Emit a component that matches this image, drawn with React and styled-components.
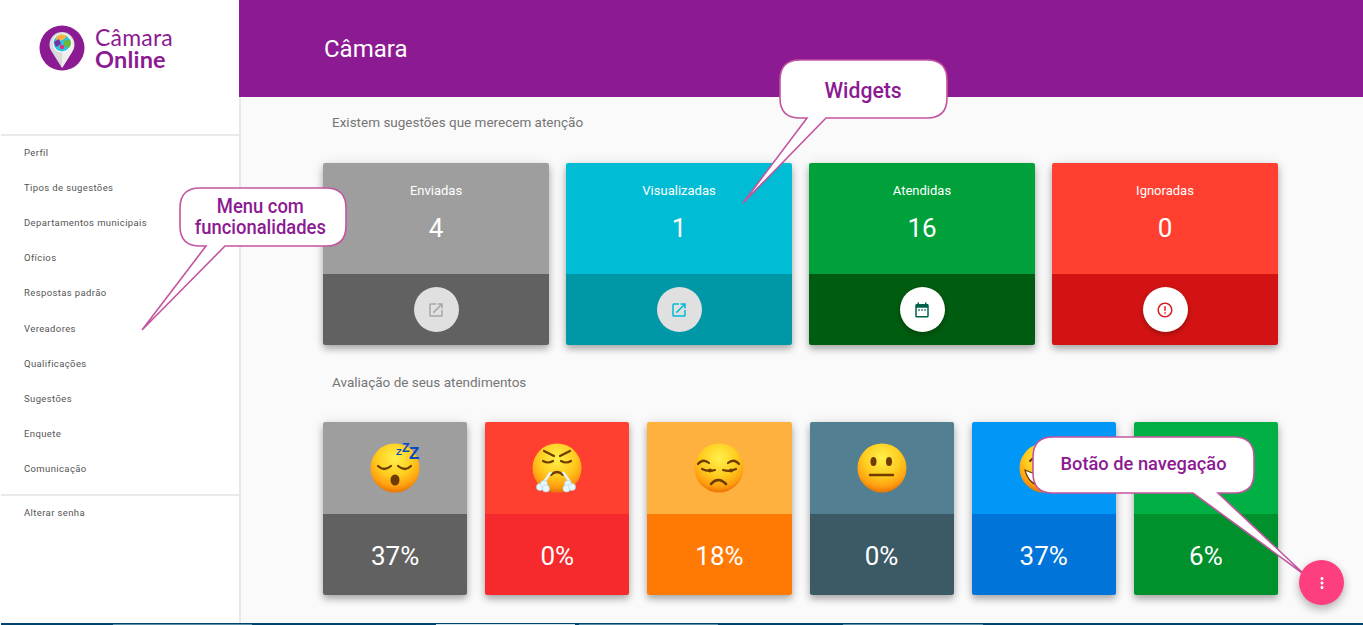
import React from "react";
import styled, { createGlobalStyle } from "styled-components";
import { MdOpenInNew, MdDateRange, MdErrorOutline, MdMoreVert } from "react-icons/md";

const GlobalStyle = createGlobalStyle`
  html, body {
    margin: 0;
    padding: 0;
    background: #fff;
    font-family: Roboto, "Liberation Sans", sans-serif;
    overflow: hidden;
  }
`;

const Page = styled.div`
  position: relative;
  width: 1363px;
  height: 625px;
  overflow: hidden;
  display: flex;
  flex-direction: column;
`;

const Main = styled.div`
  display: flex;
  height: 623px;
`;

/* sidebar */
const Sidebar = styled.aside`
  width: 239px;
  flex: none;
  background: #fff;
`;

const Brand = styled.div`
  height: 136px;
  display: flex;
  align-items: flex-start;
  gap: 10px;
  padding: 25px 0 0 38px;
  box-sizing: border-box;
  border-bottom: 2px solid #eaeaea;
  margin-left: 1px;
`;

const BrandText = styled.div`
  display: flex;
  flex-direction: column;
  color: #8c1a92;
  font-family: Lato, sans-serif;
  font-size: 23px;
  line-height: 22px;
  margin-top: 1px;
  letter-spacing: 0.2px;
`;

const BrandStrong = styled.span`
  font-weight: 700;
  font-size: 23.5px;
`;

const Menu = styled.ul`
  list-style: none;
  margin: ${({ $top }) => $top}px 0 0;
  padding: 0;
`;

const MenuItem = styled.li`
  height: 35.1px;
  padding-left: 24px;
  display: flex;
  align-items: center;
  font-size: 9.5px;
  letter-spacing: 0.38px;
  color: #555;
`;

const MenuRule = styled.hr`
  margin: 8px 0 0 1px;
  border: 0;
  border-top: 2px solid #eaeaea;
`;

/* content */
const Content = styled.main`
  flex: 1;
  display: flex;
  flex-direction: column;
  min-width: 0;
`;

const Header = styled.header`
  height: 97px;
  flex: none;
  background: #8c1a92;
  display: flex;
  align-items: center;
  padding-left: 85px;
  color: #fff;
  font-size: 24px;
  font-weight: 400;
`;

const Body = styled.div`
  flex: 1;
  background: #fafafa;
  border-left: 2px solid #e8e8e8;
  padding: 16px 85px 0 82px;
`;

const SectionTitle = styled.h2`
  margin: ${({ $first }) => ($first ? "0 0 32px" : "28px 0 31px")};
  padding-left: 9px;
  height: 18px;
  line-height: 18px;
  font-size: 13.5px;
  font-weight: 400;
  color: #757575;
`;

const CardGrid = styled.div`
  display: grid;
  grid-template-columns: repeat(${({ $cols }) => $cols}, 1fr);
  column-gap: ${({ $gap }) => $gap}px;
`;

const Card = styled.section`
  display: flex;
  flex-direction: column;
  border-radius: 2px;
  overflow: hidden;
  color: #fff;
  box-shadow: 0 4px 7px rgba(0, 0, 0, 0.3), 0 0 14px rgba(0, 0, 0, 0.08);
`;

const StatTop = styled.div`
  height: 111px;
  background: ${({ $bg }) => $bg};
  display: flex;
  flex-direction: column;
  align-items: center;
`;

const StatLabel = styled.div`
  margin-top: 20px;
  height: 16px;
  line-height: 16px;
  font-size: 13px;
`;

const StatValue = styled.div`
  margin-top: 14px;
  height: 30px;
  line-height: 30px;
  font-size: 26px;
`;

const StatBottom = styled.div`
  height: 71px;
  background: ${({ $bg }) => $bg};
  display: flex;
  justify-content: center;
  padding-top: 13px;
  box-sizing: border-box;
`;

const IconCircle = styled.div`
  width: 45px;
  height: 45px;
  border-radius: 50%;
  background: ${({ $bg }) => $bg};
  color: ${({ $fg }) => $fg};
  display: flex;
  align-items: center;
  justify-content: center;
  box-shadow: 0 2px 5px rgba(0, 0, 0, ${({ $shadow }) => ($shadow ? 0.3 : 0)});
`;

const RateTop = styled.div`
  height: 92px;
  background: ${({ $bg }) => $bg};
  display: flex;
  align-items: center;
  justify-content: center;
`;

const RateBottom = styled.div`
  height: 81px;
  padding-top: 2px;
  box-sizing: border-box;
  background: ${({ $bg }) => $bg};
  display: flex;
  align-items: center;
  justify-content: center;
  font-size: 26px;
`;

const Fab = styled.button`
  position: absolute;
  left: 1299px;
  top: 560px;
  width: 45px;
  height: 45px;
  padding: 0;
  border: 0;
  border-radius: 50%;
  background: #fe3f7f;
  color: #fff;
  display: flex;
  align-items: center;
  justify-content: center;
  box-shadow: 0 4px 10px rgba(0, 0, 0, 0.3);
  z-index: 3;
`;

/* taskbar sliver at the bottom of the capture */
const Strip = styled.div`
  height: 2px;
  margin-left: 1px;
  background: #00436f;
  display: flex;
  align-items: flex-end;
`;

const StripTab = styled.div`
  height: 1px;
  width: ${({ $w }) => $w}px;
  margin-left: ${({ $gap }) => $gap}px;
  background: ${({ $light }) => ($light ? "#cfe0e8" : "#5b8fa8")};
`;

/* annotation bubbles */
const Bubble = styled.div`
  position: absolute;
  left: ${({ $x }) => $x}px;
  top: ${({ $y }) => $y}px;
  width: ${({ $w }) => $w}px;
  height: ${({ $h }) => $h}px;
  display: flex;
  align-items: center;
  justify-content: center;
  z-index: 2;
`;

const BubbleShape = styled.svg`
  position: absolute;
  left: 0;
  top: 0;
  overflow: visible;
`;

const BubbleText = styled.div`
  position: relative;
  text-align: center;
  color: #8c1a92;
  font-family: Roboto, sans-serif;
  font-weight: 500;
  font-size: ${({ $size }) => $size}px;
  line-height: 21.5px;
  white-space: nowrap;
  transform: translate(${({ $dx }) => $dx}px, ${({ $dy }) => $dy}px) scaleX(${({ $sx }) => $sx});
`;

const Callout = ({ x, y, w, h, r = 20, tail, size = 20, sx = 0.92, dx = 0, dy = 0, children }) => {
  const [a, b, tx, ty] = tail;
  const d = `M${r} 0H${w - r}Q${w} 0 ${w} ${r}V${h - r}Q${w} ${h} ${w - r} ${h}H${b}L${tx} ${ty}L${a} ${h}H${r}Q0 ${h} 0 ${h - r}V${r}Q0 0 ${r} 0Z`;
  return (
    <Bubble $x={x} $y={y} $w={w} $h={h}>
      <BubbleShape width={w} height={h}>
        <path d={d} fill="#fff" stroke="#c2559f" strokeWidth="1.6" />
      </BubbleShape>
      <BubbleText $size={size} $sx={sx} $dx={dx} $dy={dy}>{children}</BubbleText>
    </Bubble>
  );
};

const Logo = () => (
  <svg width="46" height="46" viewBox="0 0 46 46">
    <circle cx="23" cy="23" r="22.5" fill="#8c1a92" />
    <path d="M23 43 L13 27 A12.5 12.5 0 1 1 33 27 Z" fill="#d9d9d9" />
    <path d="M23 43 L23 8 A12.5 12.5 0 0 1 33 27 Z" fill="#efefef" />
    <circle cx="23" cy="18" r="9.5" fill="#fff" />
    <circle cx="23" cy="18" r="8.5" fill="#29c4e0" />
    <path d="M17 12 A8.5 8.5 0 0 1 28 11 L24 15 L18 16 Z" fill="#ffb23e" />
    <path d="M25 16 L31 14 A8.5 8.5 0 0 1 30 23 L25 21 Z" fill="#6cb83c" />
    <path d="M15 17 L20 14 L22 19 L17 22 Z" fill="#7a2ea0" />
    <circle cx="23" cy="22" r="2.2" fill="#ea2f78" />
  </svg>
);

const Face = ({ id, children }) => (
  <svg width="50" height="50" viewBox="0 0 50 50" overflow="visible">
    <defs>
      <radialGradient id={id} cx="50%" cy="30%" r="68%">
        <stop offset="0%" stopColor="#fff04a" />
        <stop offset="55%" stopColor="#ffcb1f" />
        <stop offset="85%" stopColor="#ff9f10" />
        <stop offset="100%" stopColor="#ec7a05" />
      </radialGradient>
    </defs>
    <circle cx="25" cy="25" r="24.5" fill={`url(#${id})`} />
    {children}
  </svg>
);

const BROWN = "#6e3b00";
const faceLine = { fill: "none", stroke: BROWN, strokeWidth: 2.2, strokeLinecap: "round" };
const zzz = { fontFamily: "Liberation Sans", fontWeight: 700, fill: "#0b49c4" };

const Sleepy = () => (
  <Face id="f-sleep">
    <path d="M8 23Q14 29 21 23" {...faceLine} />
    <path d="M28 23Q35 29 41 23" {...faceLine} />
    <ellipse cx="25" cy="37" rx="4.5" ry="5.5" fill={BROWN} />
    <text x="26" y="12" fontSize="9.5" {...zzz}>Z</text>
    <text x="32" y="9" fontSize="12.5" {...zzz}>Z</text>
    <text x="39" y="16" fontSize="17" {...zzz}>Z</text>
  </Face>
);

const Huffing = () => (
  <Face id="f-huff">
    <path d="M12 8L22 13" {...faceLine} />
    <path d="M38 8L28 13" {...faceLine} />
    <path d="M11 18Q16 21 21 18" {...faceLine} />
    <path d="M29 18Q34 21 39 18" {...faceLine} />
    <path d="M19 32Q25 26 31 32" {...faceLine} />
    <path d="M19 29L12 39" stroke="#e4f4fb" strokeWidth="2.4" fill="none" />
    <path d="M31 29L38 39" stroke="#e4f4fb" strokeWidth="2.4" fill="none" />
    <g fill="#eaf7fd" stroke="#9ed4ee" strokeWidth="0.6">
      <circle cx="8" cy="44" r="3.6" />
      <circle cx="12" cy="41" r="3.6" />
      <circle cx="14" cy="45.5" r="3.6" />
      <circle cx="36" cy="41" r="3.6" />
      <circle cx="34.5" cy="45.5" r="3.6" />
      <circle cx="40" cy="44" r="3.6" />
    </g>
  </Face>
);

const Unamused = () => (
  <Face id="f-unamused">
    <path d="M4 21Q9 15 15 20" {...faceLine} />
    <path d="M34 20Q40 15 45 21" {...faceLine} />
    <path d="M8 26Q14 29 21 27" {...faceLine} />
    <path d="M29 27Q36 29 42 26" {...faceLine} />
    <circle cx="16" cy="27.5" r="2" fill={BROWN} />
    <circle cx="37" cy="27.5" r="2" fill={BROWN} />
    <path d="M17 41Q24 33 32 41" fill="none" stroke={BROWN} strokeWidth="2.6" strokeLinecap="round" />
  </Face>
);

const Neutral = () => (
  <Face id="f-neutral">
    <ellipse cx="16.5" cy="18.5" rx="3" ry="4.5" fill={BROWN} />
    <ellipse cx="32" cy="18.5" rx="3" ry="4.5" fill={BROWN} />
    <path d="M13 32H36" fill="none" stroke={BROWN} strokeWidth="2.4" strokeLinecap="round" />
  </Face>
);

const Grin = ({ id }) => (
  <Face id={id}>
    <path d="M6 27Q25 36 44 27Q40 43 25 43Q10 43 6 27Z" fill="#fff" stroke={BROWN} strokeWidth="1.2" />
    <path d="M11 18Q16 12 21 18" {...faceLine} />
    <path d="M29 18Q34 12 39 18" {...faceLine} />
  </Face>
);

const stats = [
  { label: "Enviadas", value: 4, top: "#9e9e9e", bottom: "#616161", circle: "#e0e0e0", color: "#a6a6a6", Icon: MdOpenInNew, shadow: false },
  { label: "Visualizadas", value: 1, top: "#00bcd4", bottom: "#0097a7", circle: "#e0e0e0", color: "#00bcd4", Icon: MdOpenInNew, shadow: false },
  { label: "Atendidas", value: 16, top: "#00a13b", bottom: "#005c10", circle: "#fff", color: "#00604a", Icon: MdDateRange, shadow: true },
  { label: "Ignoradas", value: 0, top: "#ff4031", bottom: "#d31313", circle: "#fff", color: "#d81e1e", Icon: MdErrorOutline, shadow: true },
];

const ratings = [
  { face: <Sleepy />, value: "37%", top: "#9e9e9e", bottom: "#616161" },
  { face: <Huffing />, value: "0%", top: "#ff4031", bottom: "#f6292c" },
  { face: <Unamused />, value: "18%", top: "#ffb140", bottom: "#ff7a04" },
  { face: <Neutral />, value: "0%", top: "#527f92", bottom: "#3b5a66" },
  { face: <Grin id="f-grin-a" />, value: "37%", top: "#0097f7", bottom: "#0074d9" },
  { face: <Grin id="f-grin-b" />, value: "6%", top: "#00b045", bottom: "#00902c" },
];

const menuItems = [
  "Perfil",
  "Tipos de sugestões",
  "Departamentos municipais",
  "Ofícios",
  "Respostas padrão",
  "Vereadores",
  "Qualificações",
  "Sugestões",
  "Enquete",
  "Comunicação",
];

const stripTabs = [
  { gap: 112, w: 139 },
  { gap: 184, w: 139, light: true },
  { gap: 4, w: 139 },
  { gap: 125, w: 140 },
];

const App = () => (
  <Page>
    <GlobalStyle />
    <Main>
      <Sidebar>
        <Brand>
          <Logo />
          <BrandText>
            <span>Câmara</span>
            <BrandStrong>Online</BrandStrong>
          </BrandText>
        </Brand>
        <Menu $top={-1}>
          {menuItems.map((item) => (
            <MenuItem key={item}>{item}</MenuItem>
          ))}
        </Menu>
        <MenuRule />
        <Menu $top={-1}>
          <MenuItem>Alterar senha</MenuItem>
        </Menu>
      </Sidebar>
      <Content>
        <Header>Câmara</Header>
        <Body>
          <SectionTitle $first>Existem sugestões que merecem atenção</SectionTitle>
          <CardGrid $cols={4} $gap={17}>
            {stats.map(({ label, value, top, bottom, circle, color, Icon, shadow }) => (
              <Card key={label}>
                <StatTop $bg={top}>
                  <StatLabel>{label}</StatLabel>
                  <StatValue>{value}</StatValue>
                </StatTop>
                <StatBottom $bg={bottom}>
                  <IconCircle $bg={circle} $fg={color} $shadow={shadow}>
                    <Icon size={18} />
                  </IconCircle>
                </StatBottom>
              </Card>
            ))}
          </CardGrid>
          <SectionTitle>Avaliação de seus atendimentos</SectionTitle>
          <CardGrid $cols={6} $gap={18}>
            {ratings.map(({ face, value, top, bottom }, i) => (
              <Card key={i}>
                <RateTop $bg={top}>{face}</RateTop>
                <RateBottom $bg={bottom}>{value}</RateBottom>
              </Card>
            ))}
          </CardGrid>
        </Body>
      </Content>
    </Main>
    <Strip>
      {stripTabs.map((tab) => (
        <StripTab key={tab.gap} $gap={tab.gap} $w={tab.w} $light={tab.light} />
      ))}
    </Strip>

    <Callout x={180} y={188} w={166} h={58} tail={[26, 45, -38, 142]} dx={-3}>
      Menu com
      <br />
      funcionalidades
    </Callout>
    <Callout x={780} y={60} w={167} h={58} tail={[27, 46, -37, 143]} size={22.5} sx={0.94} dy={1.5}>
      Widgets
    </Callout>
    <Callout x={1033} y={437} w={221} h={56} tail={[160, 185, 272, 138]} size={18.3} sx={1} dy={-1.5}>
      Botão de navegação
    </Callout>
    <Fab aria-label="Navegação">
      <MdMoreVert size={18} />
    </Fab>
  </Page>
);

export default App;
